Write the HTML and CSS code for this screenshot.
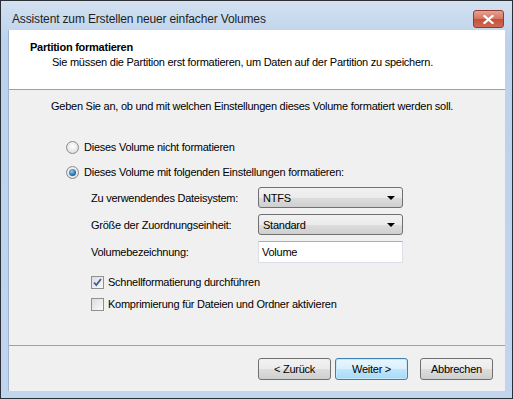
FILE: index.html
```html
<html>
<head>
    <meta charset="utf-8">
    <link rel="stylesheet" href="styles.css">
</head>
<body>
    <div class="window">
        <div class="titlebar">
            <span class="titlebar__text">Assistent zum Erstellen neuer einfacher Volumes</span>
            <div class="titlebar__close">
                <svg width="11" height="9" viewBox="0 0 11 9">
                    <path d="M1.5 1 L9.5 8 M9.5 1 L1.5 8" stroke="#fff" stroke-width="2.2" stroke-linecap="square"/>
                </svg>
            </div>
        </div>
        <div class="client">
            <div class="header">
                <div class="header__title">Partition formatieren</div>
                <div class="header__sub">Sie müssen die Partition erst formatieren, um Daten auf der Partition zu speichern.</div>
            </div>
            <div class="main">
                <div class="intro">Geben Sie an, ob und mit welchen Einstellungen dieses Volume formatiert werden soll.</div>

                <div class="option option--first">
                    <span class="radio"></span>
                    <span>Dieses Volume nicht formatieren</span>
                </div>
                <div class="option">
                    <span class="radio radio--checked"></span>
                    <span>Dieses Volume mit folgenden Einstellungen formatieren:</span>
                </div>

                <div class="settings">
                    <label class="settings__label">Zu verwendendes Dateisystem:</label>
                    <div class="combo">
                        <span>NTFS</span>
                        <span class="combo__arrow"></span>
                    </div>
                    <label class="settings__label">Größe der Zuordnungseinheit:</label>
                    <div class="combo">
                        <span>Standard</span>
                        <span class="combo__arrow"></span>
                    </div>
                    <label class="settings__label">Volumebezeichnung:</label>
                    <div class="textbox">Volume</div>
                </div>

                <div class="check check--first">
                    <span class="checkbox">
                        <svg width="11" height="11" viewBox="0 0 11 11">
                            <path d="M2 5.5 L4.3 8 L9 2" fill="none" stroke="#3d5d99" stroke-width="1.8"/>
                        </svg>
                    </span>
                    <span>Schnellformatierung durchführen</span>
                </div>
                <div class="check">
                    <span class="checkbox"></span>
                    <span>Komprimierung für Dateien und Ordner aktivieren</span>
                </div>
            </div>
            <div class="footer">
                <button class="btn">&lt; Zurück</button>
                <button class="btn btn--default">Weiter &gt;</button>
                <button class="btn btn--cancel">Abbrechen</button>
            </div>
        </div>
    </div>
</body>
</html>
```

FILE: styles.css
```css
body {
    margin: 0;
    font-family: "Liberation Sans", Arial, sans-serif;
    font-size: 11px;
    letter-spacing: -0.25px;
    color: #000;
}

.window {
    width: 513px;
    height: 399px;
    box-sizing: border-box;
    border: 1px solid #2b2f36;
    background: linear-gradient(#d3e1f1, #bcd2eb 40px, #c1d6ee);
    padding: 0 7px 7px;
    display: flex;
    flex-direction: column;
}

.titlebar {
    height: 29px;
    display: flex;
    align-items: flex-start;
    position: relative;
}

.titlebar__text {
    margin: 11px 0 0 4px;
    line-height: 15px;
    font-size: 12px;
    letter-spacing: -0.15px;
    color: #1e1e1e;
}

.titlebar__close {
    position: absolute;
    right: 1px;
    top: 9px;
    width: 29px;
    height: 16px;
    border: 1px solid #8f3b30;
    border-radius: 3px;
    background: linear-gradient(#e6a294, #d5735f 50%, #c4503a 51%, #cf6a52);
    display: flex;
    align-items: center;
    justify-content: center;
}

.client {
    flex: 1;
    background: #f0f0f0;
    display: flex;
    flex-direction: column;
    border-left: 1px solid #9fb4cf;
}

.header {
    background: #fff;
    border-bottom: 1px solid #a0a0a0;
    padding-top: 10px;
    height: 49px;
}

.header__title {
    font-weight: bold;
    line-height: 15px;
    margin-left: 21px;
}

.header__sub {
    line-height: 15px;
    margin-left: 43px;
}

.main {
    flex: 1;
    padding: 8px 0 0 42px;
}

.intro {
    line-height: 16px;
}

.option {
    display: flex;
    align-items: center;
    height: 16px;
    margin: 9px 0 0 15px;
}

.option--first {
    margin-top: 25px;
}

.radio {
    width: 11px;
    height: 11px;
    border: 1px solid #8a8a8a;
    border-radius: 50%;
    background: radial-gradient(circle at 50% 40%, #fff, #d6d6d6);
    margin-right: 5px;
    position: relative;
}

.radio--checked::after {
    content: "";
    position: absolute;
    left: 2px;
    top: 2px;
    width: 7px;
    height: 7px;
    border-radius: 50%;
    background: radial-gradient(circle at 40% 35%, #8ad0f5, #1d5f9c 70%);
}

.settings {
    display: grid;
    grid-template-columns: 167px 145px;
    row-gap: 6px;
    margin: 7px 0 0 40px;
    align-items: center;
}

.settings__label {
    line-height: 16px;
}

.combo {
    height: 21px;
    box-sizing: border-box;
    border: 1px solid #707070;
    border-radius: 3px;
    background: linear-gradient(#f2f2f2, #ebebeb 50%, #dddddd 51%, #cfcfcf);
    display: flex;
    align-items: center;
    justify-content: space-between;
    padding: 0 7px 0 4px;
}

.combo__arrow {
    width: 0;
    height: 0;
    border-left: 4px solid transparent;
    border-right: 4px solid transparent;
    border-top: 4px solid #000;
}

.textbox {
    height: 22px;
    box-sizing: border-box;
    border: 1px solid #dbdfe6;
    border-top-color: #abadb3;
    background: #fff;
    padding: 0 3px;
    line-height: 20px;
}

.check {
    display: flex;
    align-items: center;
    height: 16px;
    margin: 6px 0 0 40px;
}

.check--first {
    margin-top: 11px;
}

.checkbox {
    width: 11px;
    height: 11px;
    border: 1px solid #8e8f8f;
    background: linear-gradient(135deg, #dcdcdc, #fbfbfb);
    margin-right: 4px;
    display: flex;
}

.footer {
    height: 46px;
    border-top: 1px solid #a0a0a0;
    display: flex;
    align-items: flex-start;
    justify-content: flex-end;
    padding: 12px 12px 0 0;
    box-sizing: border-box;
}

.btn {
    width: 73px;
    height: 22px;
    font-family: inherit;
    font-size: 11px;
    letter-spacing: -0.25px;
    color: #000;
    border: 1px solid #707070;
    border-radius: 3px;
    background: linear-gradient(#f2f2f2, #ebebeb 50%, #dddddd 51%, #cfcfcf);
    margin-left: 4px;
    padding: 0;
}

.btn--default {
    border-color: #3c7fb1;
    background: linear-gradient(#eaf6fd, #d9f0fc 50%, #bee6fd 51%, #a7d9f5);
    box-shadow: inset 0 0 0 1px #c5e8fb;
}

.btn--cancel {
    margin-left: 12px;
}
```
